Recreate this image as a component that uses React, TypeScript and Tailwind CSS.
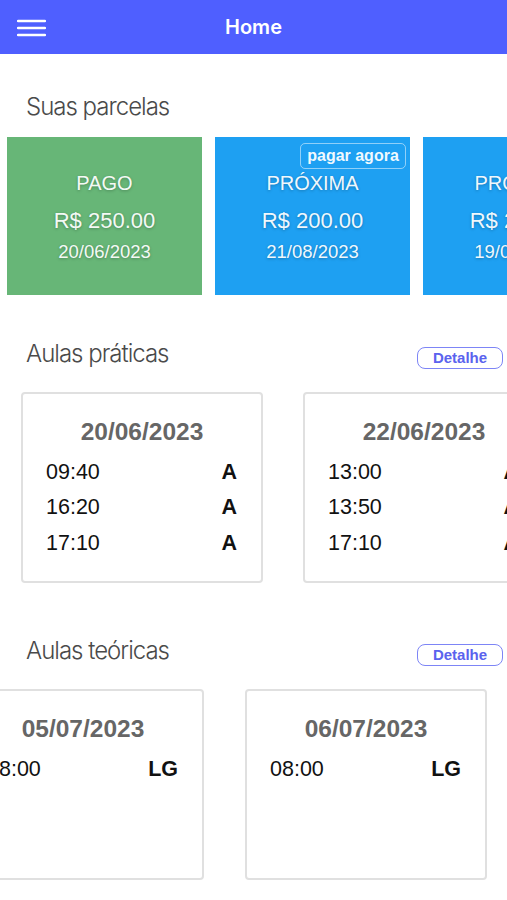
import React from "react";

const sans = "font-['Liberation_Sans',Arial,sans-serif]";

function PayCard({ status, value, date, color, badge }: { status: string; value: string; date: string; color: string; badge?: boolean }) {
  return (
    <div className={`relative shrink-0 w-[195px] h-[158px] ${color} flex flex-col items-center text-white/95 ${sans} [text-shadow:0_1px_3px_rgba(0,0,0,0.25)]`}>
      {badge && (
        <div className="absolute top-[6px] right-[4px] w-[106px] h-[26px] rounded-[5px] border border-white/50 flex items-center justify-center text-[16px] font-bold [text-shadow:none]">
          pagar agora
        </div>
      )}
      <div className="mt-[34px] text-[20px] leading-[24px]">{status}</div>
      <div className="mt-[13px] text-[22px] leading-[26px]">{value}</div>
      <div className="mt-[7px] text-[18.5px] leading-[22px]">{date}</div>
    </div>
  );
}

function ClassCard({ date, rows }: { date: string; rows: [string, string][] }) {
  return (
    <div className={`shrink-0 w-[242px] h-[191px] rounded-[4px] border-2 border-[#e0e0e0] bg-white flex flex-col ${sans}`}>
      <div className="mt-[24px] text-center text-[24.5px] leading-[28px] font-bold text-[#666]">{date}</div>
      <div className="mt-[8px] flex flex-col pl-[23px] pr-[24px]">
        {rows.map(([t, l], i) => (
          <div key={i} className="flex justify-between items-center h-[35.5px] text-[21.5px] text-[#111]">
            <span>{t}</span>
            <span className="font-bold">{l}</span>
          </div>
        ))}
      </div>
    </div>
  );
}

function SectionHeader({ title, button }: { title: string; button?: boolean }) {
  return (
    <div className="flex justify-between items-start pl-[26px] pr-[4px]">
      <h2 className="font-['Inter',sans-serif] font-light text-[24px] leading-[29px] tracking-[-1px] text-[#4a4a4a]">{title}</h2>
      {button && (
        <button className={`mt-[8px] w-[86px] h-[22px] rounded-[8px] border-[1.5px] border-[#7d85f6] text-[#5a63ee] text-[15px] font-bold leading-[18px] ${sans}`}>
          Detalhe
        </button>
      )}
    </div>
  );
}

export default function App() {
  return (
    <div className="w-[507px] h-[900px] overflow-hidden bg-white">
      <header className="h-[54px] bg-[#4f5fff] flex items-center relative">
        <div className="absolute left-[17px] top-[19px]">
          <svg width="29" height="18" viewBox="0 0 29 18">
            <path d="M1 2h27M1 9h27M1 16h27" stroke="white" strokeWidth="2.5" strokeLinecap="round" />
          </svg>
        </div>
        <div className="flex-1 text-center text-white text-[20px] font-semibold font-['Inter',sans-serif]">Home</div>
      </header>

      <section className="pt-[38px]">
        <SectionHeader title="Suas parcelas" />
        <div className="mt-[16px] flex gap-[13px] pl-[7px] overflow-hidden">
          <PayCard status="PAGO" value="R$ 250.00" date="20/06/2023" color="bg-[#67b677]" />
          <PayCard status="PRÓXIMA" value="R$ 200.00" date="21/08/2023" color="bg-[#1ea0f2]" badge />
          <PayCard status="PRÓXIMA" value="R$ 200.00" date="19/09/2023" color="bg-[#1ea0f2]" />
        </div>
      </section>

      <section className="mt-[44px]">
        <SectionHeader title="Aulas práticas" button />
        <div className="mt-[23px] flex gap-[40px] pl-[21px] overflow-hidden">
          <ClassCard date="20/06/2023" rows={[["09:40", "A"], ["16:20", "A"], ["17:10", "A"]]} />
          <ClassCard date="22/06/2023" rows={[["13:00", "A"], ["13:50", "A"], ["17:10", "A"]]} />
        </div>
      </section>

      <section className="mt-[53px]">
        <SectionHeader title="Aulas teóricas" button />
        <div className="mt-[23px] flex overflow-hidden">
          <div className="flex gap-[41px] ml-[-38px]">
            <ClassCard date="05/07/2023" rows={[["08:00", "LG"]]} />
            <ClassCard date="06/07/2023" rows={[["08:00", "LG"]]} />
            <ClassCard date="07/07/2023" rows={[["08:00", "LG"]]} />
          </div>
        </div>
      </section>
    </div>
  );
}
